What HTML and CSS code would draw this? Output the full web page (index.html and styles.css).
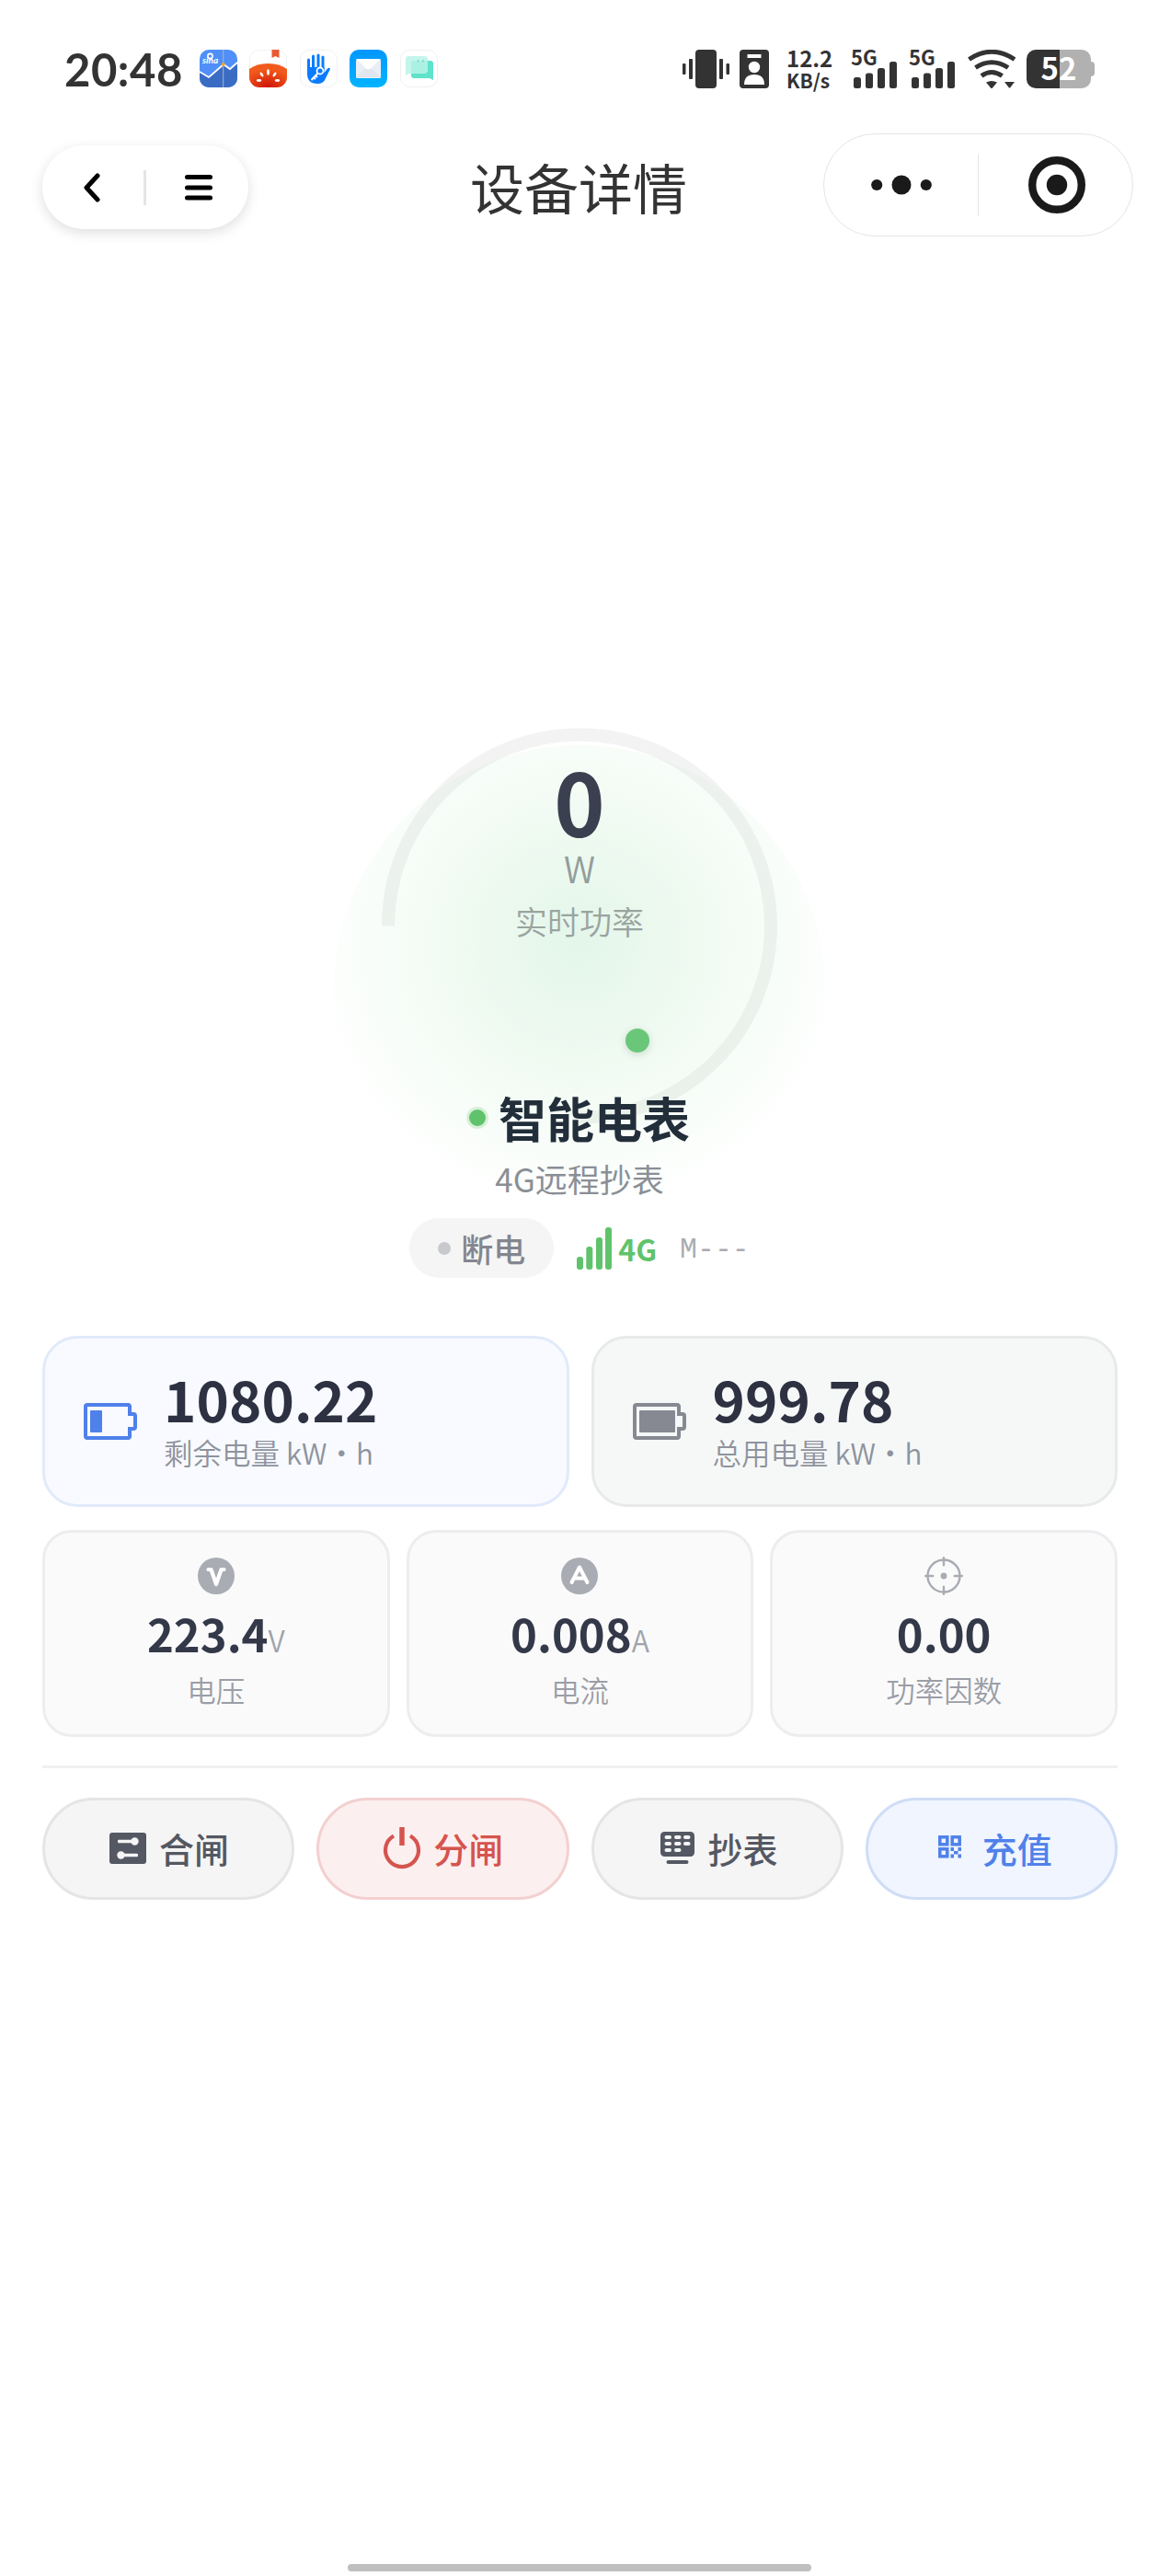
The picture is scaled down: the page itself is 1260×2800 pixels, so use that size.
FILE: index.html
```html
<!DOCTYPE html>
<html lang="zh-CN">
<head>
    <meta charset="UTF-8">
    <meta name="viewport" content="width=device-width, initial-scale=1.0">
    <title>设备详情</title>
    <link rel="stylesheet" href="styles.css">
</head>
<body>
    <div class="page">
        <!-- Status bar -->
        <div class="status-bar">
            <div class="status-left">
                <span class="time">20:48</span>
                <svg class="app-icon" viewBox="0 0 41 41">
                    <rect width="41" height="41" rx="10" fill="#4f8ff7"/>
                    <path d="M0 24l10 6 16-14 7 5 8-7v17a10 10 0 0 1-10 10H10A10 10 0 0 1 0 31z" fill="#3b6cc4"/>
                    <path d="M0 24l10 6 16-14 7 5 8-7" fill="none" stroke="#fff" stroke-width="1.8"/>
                    <path d="M25.7 0v41" stroke="#a9b4c6" stroke-width="1"/>
                    <circle cx="25.7" cy="16" r="1.9" fill="#f5a623"/>
                    <circle cx="11.5" cy="7" r="2.6" fill="none" stroke="#fff" stroke-width="1.6"/>
                    <text x="3" y="15" class="sina">sina</text>
                </svg>
                <svg class="app-icon" viewBox="0 0 41 41">
                    <defs>
                        <radialGradient id="tomato" cx="50%" cy="95%" r="70%">
                            <stop offset="0" stop-color="#cf1507"/>
                            <stop offset="1" stop-color="#f15a1c"/>
                        </radialGradient>
                    </defs>
                    <rect x=".5" y=".5" width="40" height="40" rx="10" fill="#fff" stroke="#f2f2f2"/>
                    <path d="M0 21Q8 15 20.500 15T41 21v9a11 11 0 0 1-11 11H11A11 11 0 0 1 0 30z" fill="url(#tomato)"/>
                    <path d="M24.500 0h8v9l-4-2-4 2z" fill="#ea5a32"/>
                    <g fill="#fff">
                        <ellipse cx="20.500" cy="24.500" rx="1.400" ry="3.200"/>
                        <ellipse cx="13.500" cy="27" rx="1.400" ry="2.800" transform="rotate(-35 13.500 27)"/>
                        <ellipse cx="27.500" cy="27" rx="1.400" ry="2.800" transform="rotate(35 27.500 27)"/>
                        <ellipse cx="10.500" cy="33.500" rx="2.800" ry="1.400"/>
                        <ellipse cx="30.500" cy="33.500" rx="2.800" ry="1.400"/>
                    </g>
                </svg>
                <svg class="app-icon" viewBox="0 0 41 41">
                    <rect x=".5" y=".5" width="40" height="40" rx="10" fill="#fff" stroke="#f0f0f0"/>
                    <path d="M9.500 11v15M14.500 7v14M20 6v14M25 8v14" stroke="#0a7cff" stroke-width="3" stroke-linecap="round"/>
                    <path d="M8 19h18.500v6l4-5q2-.8 2.500 1l-5 10q-2 6-9 6-11 0-11-11z" fill="#0a7cff"/>
                    <circle cx="22" cy="23" r="3.500" fill="#0a7cff" stroke="#fff" stroke-width="1.800"/>
                    <path d="M19.500 25.500L12.500 33M15 30l2 2M17 28l2 2" fill="none" stroke="#fff" stroke-width="1.900"/>
                </svg>
                <svg class="app-icon" viewBox="0 0 41 41">
                    <defs>
                        <linearGradient id="mail" x1="0" y1="0" x2="0" y2="1">
                            <stop offset="0" stop-color="#0097ff"/>
                            <stop offset="1" stop-color="#00b4ff"/>
                        </linearGradient>
                    </defs>
                    <rect width="41" height="41" rx="10" fill="url(#mail)"/>
                    <rect x="7" y="10" width="27" height="21" rx="1.500" fill="#e9eef4"/>
                    <path d="M7 30L18 20h5l11 10z" fill="#dfe6ee"/>
                    <path d="M7.500 10h26L23 20.500q-2.500 2-5 0z" fill="#fff"/>
                </svg>
                <svg class="app-icon" viewBox="0 0 41 41">
                    <rect x=".5" y=".5" width="40" height="40" rx="10" fill="#fff" stroke="#f0f0f0"/>
                    <path d="M14 12h19q3 0 3 3v18l-4-2H15q-3 0-3-3V15q0-3 2-3z" fill="#5fe3cb"/>
                    <path d="M9 7h17q4 0 4 4v11q0 4-4 4H10l-4 2V10q0-3 3-3z" fill="#b9f3e7" opacity=".85"/>
                    <path d="M19.500 11v2.500M25 11v2.500" stroke="#6bcbb9" stroke-width="1"/>
                </svg>
            </div>
            <div class="status-right">
                <svg class="vibrate" viewBox="0 0 51 42">
                    <rect x="14" width="23" height="42" rx="4"/>
                    <rect x="7" y="10" width="4" height="22" rx="1"/>
                    <rect y="15" width="3.500" height="12" rx="1"/>
                    <rect x="40" y="10" width="4" height="22" rx="1"/>
                    <rect x="47.500" y="15" width="3.500" height="12" rx="1"/>
                </svg>
                <svg class="id-card" viewBox="0 0 32 42">
                    <rect width="32" height="42" rx="4"/>
                    <g fill="#fff">
                        <rect x="8.500" y="5" width="15" height="4"/>
                        <circle cx="16" cy="19" r="6.200"/>
                        <path d="M5 38q0-11 11-11t11 11z"/>
                    </g>
                </svg>
                <div class="speed"><span>12.2</span><span class="speed-unit">KB/s</span></div>
                <div class="cell">
                    <span class="cell-text">5G</span>
                    <svg viewBox="0 0 50 42">
                        <rect x="2" y="30" width="8" height="12" rx="2.500"/>
                        <rect x="15" y="25.500" width="8" height="16.500" rx="2.500"/>
                        <rect x="28" y="20" width="8" height="22" rx="2.500"/>
                        <rect x="41" y="13" width="8" height="29" rx="2.500"/>
                    </svg>
                </div>
                <div class="cell">
                    <span class="cell-text">5G</span>
                    <svg viewBox="0 0 50 42">
                        <rect x="2" y="30" width="8" height="12" rx="2.500"/>
                        <rect x="15" y="25.500" width="8" height="16.500" rx="2.500"/>
                        <rect x="28" y="20" width="8" height="22" rx="2.500"/>
                        <rect x="41" y="13" width="8" height="29" rx="2.500"/>
                    </svg>
                </div>
                <svg class="wifi" viewBox="0 0 53 42">
                    <g fill="none" stroke="#333" stroke-width="5">
                        <path d="M1.500 10.500Q26 -6 51 10.500"/>
                        <path d="M8.500 19.500Q26 8 44 19.500"/>
                        <path d="M15 28.500Q26 20.500 37.500 28.500"/>
                    </g>
                    <path d="M20 35.500q6-3 12 0L26.500 42h-1z"/>
                    <path d="M40 35h11l-5 6.500h-1z"/>
                </svg>
                <div class="battery">52</div>
            </div>
        </div>

        <!-- Navigation -->
        <div class="nav-bar">
            <div class="nav-left">
                <svg class="back-icon" viewBox="0 0 20 32"><path d="M16 3L4 16l12 13"/></svg>
                <span class="nav-left-line"></span>
                <svg class="menu-icon" viewBox="0 0 30 32"><path d="M2.500 4.500h25M2.500 16h25M2.500 27h25"/></svg>
            </div>
            <div class="nav-title">设备详情</div>
            <div class="nav-right">
                <div class="nav-half">
                    <svg class="more-icon" viewBox="0 0 66 22">
                        <circle cx="6.200" cy="11" r="6.100"/>
                        <circle cx="33" cy="11" r="10.500"/>
                        <circle cx="59.800" cy="11" r="6.100"/>
                    </svg>
                </div>
                <span class="nav-right-line"></span>
                <div class="nav-half">
                    <svg class="close-icon" viewBox="0 0 62 62">
                        <circle cx="31" cy="31" r="26.800" fill="none" stroke="#1a1a1a" stroke-width="8.400"/>
                        <circle cx="31" cy="31" r="11.200"/>
                    </svg>
                </div>
            </div>
        </div>

        <!-- Power gauge -->
        <div class="gauge">
            <svg class="gauge-ring" viewBox="0 0 430 430"><path d="M7 215.500A208 208 0 1 1 215 423.500"/></svg>
            <div class="gauge-halo"></div>
            <div class="gauge-value">0</div>
            <div class="gauge-unit">W</div>
            <div class="gauge-label">实时功率</div>
            <span class="gauge-dot"></span>
        </div>

        <!-- Device info -->
        <div class="device">
            <div class="device-name"><span class="online-dot"></span>智能电表</div>
            <div class="device-type">4G远程抄表</div>
            <div class="device-status">
                <span class="badge"><span class="badge-dot"></span>断电</span>
                <span class="signal">
                    <svg viewBox="0 0 38 46">
                        <rect y="32" width="7" height="14" rx="3"/>
                        <rect x="10.300" y="21" width="7" height="25" rx="3"/>
                        <rect x="21" y="11" width="7" height="35" rx="3"/>
                        <rect x="31" width="7" height="46" rx="3"/>
                    </svg>
                    4G
                </span>
                <span class="module">M---</span>
            </div>
        </div>

        <div class="content">
            <div class="energy-grid">
                <div class="energy-card energy-remain">
                    <svg class="battery-icon" viewBox="0 0 58 40">
                        <path d="M4 2h44.500a1.500 1.500 0 0 1 1.500 1.500V12h4a2 2 0 0 1 2 2v12a2 2 0 0 1-2 2h-4v8.500a1.500 1.500 0 0 1-1.500 1.500H4a2 2 0 0 1-2-2V4a2 2 0 0 1 2-2z" fill="none" stroke="currentColor" stroke-width="4"/>
                        <rect x="7" y="8" width="13" height="24" rx="1" fill="currentColor"/>
                    </svg>
                    <div>
                        <div class="energy-value">1080.22</div>
                        <div class="energy-label">剩余电量 kW・h</div>
                    </div>
                </div>
                <div class="energy-card energy-total">
                    <svg class="battery-icon" viewBox="0 0 58 40">
                        <path d="M4 2h44.500a1.500 1.500 0 0 1 1.500 1.500V12h4a2 2 0 0 1 2 2v12a2 2 0 0 1-2 2h-4v8.500a1.500 1.500 0 0 1-1.500 1.500H4a2 2 0 0 1-2-2V4a2 2 0 0 1 2-2z" fill="none" stroke="currentColor" stroke-width="4"/>
                        <rect x="7" y="8" width="39" height="24" rx="1" fill="currentColor"/>
                    </svg>
                    <div>
                        <div class="energy-value">999.78</div>
                        <div class="energy-label">总用电量 kW・h</div>
                    </div>
                </div>
            </div>

            <div class="stat-grid">
                <div class="stat-card">
                    <svg class="stat-icon" viewBox="0 0 42 42">
                        <circle cx="21" cy="21" r="20" fill="#a9acb3"/>
                        <path d="M12.500 14h3L21 30l5.500-16h3" fill="none" stroke="#fff" stroke-width="4.200" stroke-linecap="round" stroke-linejoin="round"/>
                    </svg>
                    <div class="stat-value">223.4<span>V</span></div>
                    <div class="stat-label">电压</div>
                </div>
                <div class="stat-card">
                    <svg class="stat-icon" viewBox="0 0 42 42">
                        <circle cx="21" cy="21" r="20" fill="#a9acb3"/>
                        <path d="M12.500 28L21 11.500 29.500 28M16 23.500h10" fill="none" stroke="#fff" stroke-width="4" stroke-linecap="round" stroke-linejoin="round"/>
                    </svg>
                    <div class="stat-value">0.008<span>A</span></div>
                    <div class="stat-label">电流</div>
                </div>
                <div class="stat-card">
                    <svg class="stat-icon" viewBox="0 0 42 42">
                        <g fill="none" stroke="#a9acb3" stroke-width="2.400" stroke-linecap="round">
                            <circle cx="21" cy="21" r="17.500"/>
                            <path d="M21 1.200v8M21 32.800v8M1.200 21h8M32.800 21h8"/>
                        </g>
                        <circle cx="21" cy="21" r="3.400" fill="#a9acb3"/>
                    </svg>
                    <div class="stat-value">0.00</div>
                    <div class="stat-label">功率因数</div>
                </div>
            </div>

            <div class="divider"></div>

            <div class="actions">
                <button class="btn">
                    <svg viewBox="0 0 46 46">
                        <rect x="3" y="6" width="40" height="34" rx="3" fill="currentColor"/>
                        <g fill="#f5f5f5">
                            <rect x="12" y="13.700" width="18" height="3.600" rx="1"/>
                            <circle cx="30.500" cy="15.500" r="4.200"/>
                            <rect x="16" y="28.700" width="18" height="3.600" rx="1"/>
                            <circle cx="15.500" cy="30.500" r="4.200"/>
                        </g>
                    </svg>
                    合闸
                </button>
                <button class="btn btn-off">
                    <svg viewBox="0 0 46 46">
                        <path d="M14 9.500a18 18 0 1 0 18 0" fill="none" stroke="currentColor" stroke-width="4.200"/>
                        <path d="M23 0v20" stroke="currentColor" stroke-width="5.500"/>
                    </svg>
                    分闸
                </button>
                <button class="btn">
                    <svg viewBox="0 0 46 46">
                        <rect x="5" y="5" width="37" height="27" rx="4.500" fill="currentColor"/>
                        <g fill="#f5f5f5">
                            <rect x="9.500" y="9" width="7.500" height="4" rx="2"/>
                            <rect x="20" y="9" width="7.500" height="4" rx="2"/>
                            <rect x="30" y="9" width="7.500" height="4" rx="2"/>
                            <rect x="9.500" y="16" width="7.500" height="4" rx="2"/>
                            <rect x="20" y="16" width="7.500" height="4" rx="2"/>
                            <rect x="30" y="16" width="7.500" height="4" rx="2"/>
                            <rect x="9.500" y="23" width="7.500" height="4" rx="2"/>
                            <rect x="20" y="23" width="7.500" height="4" rx="2"/>
                        </g>
                        <rect x="11.500" y="36" width="24" height="4" rx="2" fill="currentColor"/>
                    </svg>
                    抄表
                </button>
                <button class="btn btn-pay">
                    <svg viewBox="0 0 46 46">
                        <g fill="none" stroke="currentColor" stroke-width="3.500">
                            <rect x="10.800" y="10.800" width="8" height="8"/>
                            <rect x="24.200" y="10.800" width="8" height="8"/>
                            <rect x="10.800" y="23.800" width="8" height="8"/>
                        </g>
                        <path d="M22.500 22h3.500v4h-3.500zM30.500 22h3.500v4h-3.500zM26 26h4.500v3.500H26zM22.500 29.500h3.500v4h-3.500zM30.500 29.500h3.500v4h-3.500z" fill="currentColor"/>
                    </svg>
                    充值
                </button>
            </div>
        </div>

        <div class="home-indicator"></div>
    </div>
</body>
</html>
```

FILE: styles.css
```css
* {
    box-sizing: border-box;
}

body {
    margin: 0;
    background: #fff;
    color: #333;
    font-family: 'Noto Sans CJK SC', 'Noto Sans', sans-serif;
}

svg {
    display: block;
    flex-shrink: 0;
}

.page {
    width: 1260px;
    height: 2800px;
    display: flex;
    flex-direction: column;
    overflow: hidden;
}

/* Status bar */
.status-bar {
    display: flex;
    justify-content: space-between;
    height: 145px;
    padding: 54px 74px 0 70px;
}

.status-left,
.status-right {
    display: flex;
    height: 42px;
}

.status-left {
    gap: 13.5px;
}

.time {
    width: 133px;
    font-family: Lato, sans-serif;
    font-size: 49px;
    font-weight: bold;
    line-height: 42px;
    letter-spacing: 0.5px;
    white-space: nowrap;
}

.app-icon {
    width: 41px;
    height: 41px;
}

.sina {
    font-family: Lato, sans-serif;
    font-size: 10px;
    font-weight: bold;
    font-style: italic;
    fill: #fff;
}

.status-right svg {
    fill: #333;
}

.vibrate {
    width: 51px;
    height: 42px;
    margin-right: 11px;
}

.id-card {
    width: 32px;
    height: 42px;
    margin-right: 19px;
}

.speed {
    display: flex;
    flex-direction: column;
    width: 71px;
    font-size: 24px;
    font-weight: bold;
    line-height: 18px;
}

.speed-unit {
    margin-top: 6px;
    font-size: 21px;
}

.cell {
    position: relative;
    width: 50px;
    height: 42px;
    margin-right: 13px;
}

.cell svg {
    width: 50px;
    height: 42px;
}

.cell-text {
    position: absolute;
    top: -1px;
    left: -1px;
    font-size: 22px;
    font-weight: bold;
    line-height: 17px;
}

.wifi {
    width: 53px;
    height: 42px;
    margin-right: 11px;
}

.battery {
    position: relative;
    width: 70px;
    height: 42px;
    border-radius: 10px;
    background: linear-gradient(to right, #333 36px, #b1b1b1 36px);
    color: #fff;
    font-size: 33px;
    font-weight: bold;
    line-height: 38px;
    text-align: center;
}

.battery::after {
    content: '';
    position: absolute;
    top: 13px;
    right: -4px;
    width: 4px;
    height: 16px;
    border-radius: 0 4px 4px 0;
    background: #b1b1b1;
}

/* Navigation */
.nav-bar {
    display: grid;
    grid-template-columns: 1fr auto 1fr;
    align-items: center;
    height: 112px;
}

.nav-left {
    display: flex;
    align-items: center;
    width: 224px;
    height: 91px;
    margin: 5px 0 0 46px;
    padding-left: 44px;
    border-radius: 46px;
    background: #fff;
    box-shadow: 0 4px 14px rgba(0, 0, 0, 0.13);
}

.nav-left path {
    fill: none;
    stroke: #000;
    stroke-width: 5;
    stroke-linecap: round;
    stroke-linejoin: round;
}

.back-icon {
    width: 20px;
    height: 32px;
}

.nav-left-line {
    width: 3px;
    height: 38px;
    margin: 0 42px 0 46px;
    background: #e5e5e5;
}

.menu-icon {
    width: 30px;
    height: 32px;
}

.nav-title {
    margin: 3px 0 0 -2px;
    font-size: 59px;
    line-height: 70px;
}

.nav-right {
    display: flex;
    align-items: center;
    justify-self: end;
    width: 337px;
    height: 112px;
    margin-right: 28px;
    border: 1px solid #e5e5e5;
    border-radius: 56px;
    fill: #1a1a1a;
}

.nav-half {
    flex: 1;
    display: flex;
    justify-content: center;
}

.nav-right-line {
    width: 1px;
    height: 67px;
    background: #e5e5e5;
}

.more-icon {
    width: 66px;
    height: 22px;
}

.close-icon {
    width: 62px;
    height: 62px;
    margin-left: 3px;
}

/* Power gauge */
.gauge {
    position: relative;
    width: 430px;
    height: 394px;
    margin: 534px auto 0;
    padding-top: 30px;
    text-align: center;
}

.gauge-ring {
    position: absolute;
    top: 0;
    left: 0;
    width: 430px;
    height: 430px;
    fill: none;
    stroke: #f3f3f3;
    stroke-width: 14;
}

.gauge-halo {
    position: absolute;
    top: 19px;
    left: -53px;
    width: 536px;
    height: 536px;
    border-radius: 50%;
    background: radial-gradient(circle at 50% 40%, rgba(82, 196, 120, 0.16) 0%, rgba(96, 210, 112, 0.075) 40%, rgba(96, 210, 112, 0) 70%);
}

.gauge-value,
.gauge-unit,
.gauge-label {
    position: relative;
}

.gauge-value {
    color: #3b4050;
    font-size: 94px;
    font-weight: bold;
    line-height: 96px;
}

.gauge-unit {
    margin-top: 2px;
    color: #929d9a;
    font-size: 39px;
    font-weight: 350;
    line-height: 48px;
}

.gauge-label {
    margin-top: 10px;
    color: #99a49f;
    font-size: 35px;
    font-weight: 350;
    line-height: 48px;
}

.gauge-dot {
    position: absolute;
    top: 327px;
    left: 265px;
    width: 26px;
    height: 26px;
    border-radius: 50%;
    background: #6ac779;
    box-shadow: 0 2px 8px rgba(60, 90, 65, 0.2);
}

/* Device info */
.device {
    position: relative;
    display: flex;
    flex-direction: column;
    align-items: center;
}

.device-name {
    display: flex;
    align-items: center;
    gap: 14px;
    color: #232e3b;
    font-size: 52px;
    font-weight: bold;
    line-height: 59px;
}

.online-dot {
    width: 18px;
    height: 18px;
    border-radius: 50%;
    background: #60c36b;
    box-shadow: 0 0 0 3px rgba(96, 195, 107, 0.22);
}

.device-type {
    margin-top: 13px;
    color: #8a8f96;
    font-size: 35px;
    line-height: 48px;
}

.device-status {
    display: flex;
    align-items: center;
    gap: 25px;
    margin-top: 19px;
}

.badge {
    display: flex;
    align-items: center;
    gap: 11px;
    width: 157px;
    height: 65px;
    padding-left: 31px;
    border-radius: 33px;
    background: #f5f5f5;
    color: #83868f;
    font-size: 35px;
    font-weight: 500;
    line-height: 60px;
}

.badge-dot {
    width: 14px;
    height: 14px;
    border-radius: 50%;
    background: #c8c9cd;
}

.signal {
    display: flex;
    align-items: center;
    gap: 7px;
    color: #60c36b;
    font-size: 32px;
    font-weight: bold;
    line-height: 60px;
}

.signal svg {
    width: 38px;
    height: 46px;
    fill: #60c36b;
}

.module {
    margin-top: 3px;
    color: #aaacb1;
    font-family: 'Liberation Mono', monospace;
    font-size: 31.5px;
}

/* Readings */
.content {
    display: flex;
    flex-direction: column;
    margin: 63px 45px 0 46px;
}

.energy-grid {
    display: grid;
    grid-template-columns: repeat(2, 1fr);
    gap: 24px;
}

.energy-card {
    display: flex;
    align-items: center;
    gap: 28px;
    height: 186px;
    padding: 0 42px 0 41px;
    border: 3px solid;
    border-radius: 38px;
}

.energy-remain {
    border-color: #e1eafa;
    background: #f8faff;
}

.energy-total {
    border-color: #e8eaea;
    background: #f6f8f8;
}

.battery-icon {
    width: 60px;
    height: 40px;
}

.energy-remain .battery-icon {
    color: #4f81ea;
}

.energy-total .battery-icon {
    color: #868991;
}

.energy-value {
    color: #2d3142;
    font-size: 60px;
    font-weight: bold;
    line-height: 62px;
    letter-spacing: 0.1px;
}

.energy-label {
    padding-top: 3px;
    color: #8f939d;
    font-size: 31.5px;
    font-weight: 350;
    line-height: 48px;
}

.stat-grid {
    display: grid;
    grid-template-columns: repeat(3, 1fr);
    gap: 18px;
    margin-top: 25px;
}

.stat-card {
    display: flex;
    flex-direction: column;
    align-items: center;
    height: 225px;
    padding-top: 26px;
    border: 3px solid #ededf0;
    border-radius: 32px;
    background: #fafafb;
}

.stat-icon {
    width: 42px;
    height: 42px;
}

.stat-value {
    height: 66px;
    margin-top: 8px;
    color: #343949;
    font-size: 49px;
    font-weight: bold;
    line-height: 66px;
}

.stat-value span {
    color: #a0a3aa;
    font-size: 32px;
    font-weight: 350;
    line-height: 1;
}

.stat-label {
    margin-top: 5px;
    color: #9b9ea6;
    font-size: 31.5px;
    font-weight: 350;
    line-height: 46px;
}

.divider {
    height: 3px;
    margin: 31px 0 32px;
    background: #f0f0f0;
}

/* Action buttons */
.actions {
    display: grid;
    grid-template-columns: repeat(4, 1fr);
    gap: 24px;
}

.btn {
    display: flex;
    align-items: center;
    justify-content: center;
    gap: 11px;
    height: 111px;
    padding: 0 1px 2px 0;
    border: 3px solid #e4e5e6;
    border-radius: 56px;
    background: #f5f5f5;
    color: #545863;
    font-family: inherit;
    font-size: 38px;
    font-weight: 500;
    line-height: 60px;
}

.btn svg {
    width: 46px;
    height: 46px;
}

.btn-off {
    border-color: #f3d0d0;
    background: #fcefef;
    color: #d5544e;
}

.btn-pay {
    border-color: #cfddf7;
    background: #f0f5ff;
    color: #4f81ea;
}

.home-indicator {
    width: 504px;
    height: 8px;
    margin: auto auto 5px;
    border-radius: 4px;
    background: #bfbfbf;
}
```
